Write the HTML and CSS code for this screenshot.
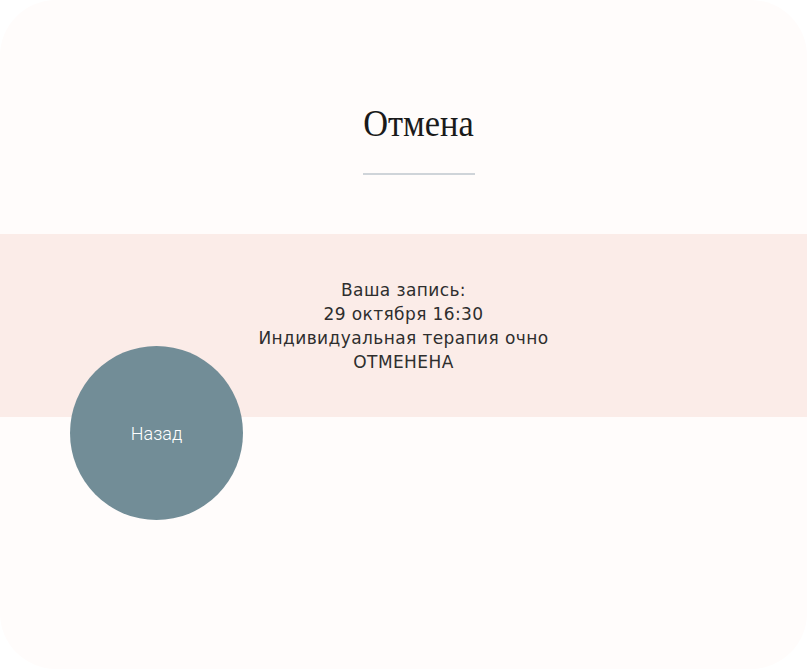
FILE: index.html
```html
<!DOCTYPE html>
<html lang="ru">
<head>
<meta charset="utf-8">
<title>Отмена</title>
<link rel="stylesheet" href="styles.css">
</head>
<body>
<div class="card">
  <header class="head">
    <h1 class="title">Отмена</h1>
    <div class="rule"></div>
  </header>
  <section class="band">
    <p class="line">Ваша запись:</p>
    <p class="line">29 октября 16:30</p>
    <p class="line">Индивидуальная терапия очно</p>
    <p class="line">ОТМЕНЕНА</p>
  </section>
  <div class="actions">
    <button class="back">Назад</button>
  </div>
</div>
</body>
</html>
```
FILE: styles.css
```css
html, body {
  margin: 0;
  padding: 0;
  background: #ffffff;
}
.card {
  width: 807px;
  height: 669px;
  background: #fffcfb;
  border-radius: 56px;
  overflow: hidden;
}
.head {
  padding-top: 101px;
  padding-left: 30px;
  display: flex;
  flex-direction: column;
  align-items: center;
  box-sizing: border-box;
  height: 234px;
}
.title {
  margin: 0;
  font-family: "Liberation Serif", serif;
  font-weight: normal;
  font-size: 37px;
  line-height: 46px;
  color: #1a1a1a;
  transform: scaleX(0.93);
}
.rule {
  margin-top: 26px;
  width: 112px;
  height: 2px;
  background: #cfd4d9;
}
.band {
  background: #fbece8;
  height: 183px;
  padding-top: 44px;
  box-sizing: border-box;
  display: flex;
  flex-direction: column;
  align-items: center;
}
.line {
  margin: 0;
  font-family: "DejaVu Sans", sans-serif;
  font-size: 17px;
  letter-spacing: 0.4px;
  line-height: 24px;
  color: #2e2e2e;
}
.actions {
  padding-left: 70px;
  margin-top: -71px;
}
.back {
  width: 173px;
  height: 174px;
  border-radius: 50%;
  border: none;
  background: #728d97;
  color: #ffffff;
  font-family: Roboto, sans-serif;
  font-weight: 300;
  font-size: 18px;
  padding: 0;
  cursor: pointer;
}
```
